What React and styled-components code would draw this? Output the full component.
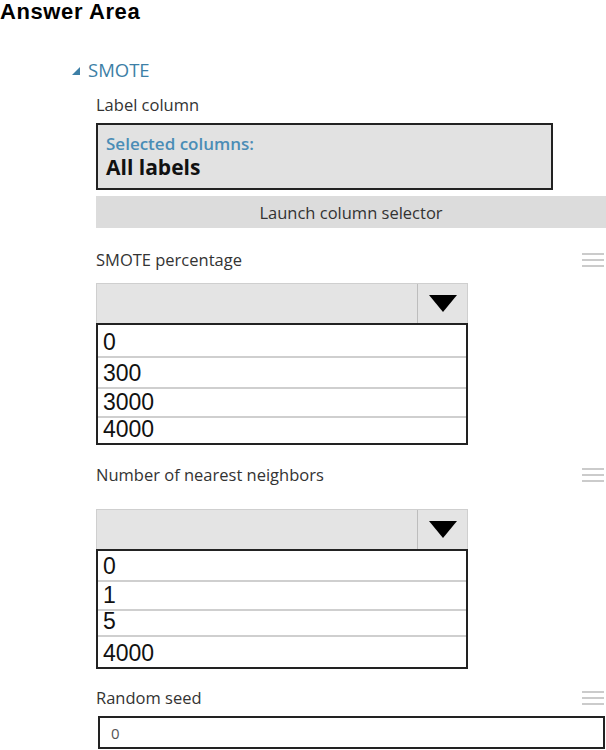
import React from 'react';
import styled, { createGlobalStyle } from 'styled-components';

const GlobalStyle = createGlobalStyle`
  html, body {
    margin: 0;
    padding: 0;
    background: #ffffff;
  }
  body {
    font-family: 'Open Sans', 'Noto Sans', sans-serif;
    color: #333;
  }
`;

const Page = styled.div`
  width: 606px;
  height: 750px;
  overflow: hidden;
  display: flex;
  flex-direction: column;
`;

const Title = styled.h1`
  margin: 0;
  font-family: 'Liberation Sans', Arial, sans-serif;
  font-size: 22px;
  letter-spacing: 0.6px;
  font-weight: bold;
  color: #000;
  line-height: 24px;
`;

const SectionHead = styled.div`
  display: flex;
  align-items: center;
  gap: 8px;
  margin: 34px 0 0 72px;
  font-size: 18.5px;
  color: #3d7fa6;
  line-height: 24px;
`;

const Caret = styled.span`
  width: 0;
  height: 0;
  border-left: 8px solid transparent;
  border-bottom: 8px solid #3d7fa6;
  margin-top: 2px;
`;

const Body = styled.div`
  display: flex;
  flex-direction: column;
  padding-left: 96px;
`;

const LabelRow = styled.div`
  display: flex;
  justify-content: space-between;
  align-items: center;
  font-size: 16.5px;
  color: #333;
  line-height: 22px;
  margin-top: ${(p) => p.$top}px;
  padding-right: 2px;
`;

const Handle = styled.span`
  display: flex;
  flex-direction: column;
  gap: 4px;
  width: 22px;
  & > i {
    display: block;
    height: 2px;
    background: #cbcbcb;
  }
`;

const SelectedBox = styled.div`
  margin-top: 7px;
  width: 457px;
  height: 67px;
  border: 2px solid #222;
  background: #e2e2e2;
  padding: 9px 0 0 8px;
  box-sizing: border-box;
`;

const SelectedCaption = styled.div`
  font-size: 17px;
  font-weight: 600;
  color: #4a8db6;
  line-height: 20px;
`;

const SelectedValue = styled.div`
  font-size: 21px;
  font-weight: bold;
  color: #111;
  line-height: 26px;
`;

const LaunchButton = styled.div`
  margin-top: 6px;
  height: 32px;
  background: #dcdcdc;
  display: flex;
  align-items: center;
  justify-content: center;
  font-size: 16.5px;
  color: #333;
`;

const Dropdown = styled.div`
  margin-top: ${(p) => p.$top}px;
  width: 372px;
  display: flex;
  flex-direction: column;
`;

const SelectBar = styled.div`
  height: 40px;
  display: flex;
  background: #e4e4e4;
  border: 1px solid #cfcfcf;
  border-bottom: none;
  box-sizing: border-box;
`;

const SelectField = styled.div`
  flex: 1;
`;

const ArrowCell = styled.div`
  width: 49px;
  border-left: 1px solid #bdbdbd;
  display: flex;
  align-items: center;
  justify-content: center;
`;

const Arrow = styled.span`
  width: 0;
  height: 0;
  border-left: 14px solid transparent;
  border-right: 14px solid transparent;
  border-top: 17px solid #000;
`;

const OptionList = styled.div`
  border: 2px solid #222;
  display: flex;
  flex-direction: column;
  background: #fff;
`;

const Option = styled.div`
  height: ${(p) => p.$h}px;
  display: flex;
  align-items: flex-end;
  padding: 0 0 2px 5px;
  box-sizing: border-box;
  font-family: 'Liberation Sans', Arial, sans-serif;
  font-size: 23px;
  line-height: 24px;
  color: #111;
  border-top: ${(p) => (p.$first ? 'none' : '2px solid #cfcfcf')};
`;

const SeedInput = styled.div`
  margin-top: 7px;
  height: 33px;
  width: 507px;
  margin-left: 2px;
  border: 2px solid #222;
  box-sizing: border-box;
  display: flex;
  align-items: center;
  padding-left: 11px;
  font-size: 15px;
  color: #555;
`;

const HandleIcon = () => (
  <Handle>
    <i />
    <i />
    <i />
  </Handle>
);

const DropList = ({ top, options }) => (
  <Dropdown $top={top}>
    <SelectBar>
      <SelectField />
      <ArrowCell>
        <Arrow />
      </ArrowCell>
    </SelectBar>
    <OptionList>
      {options.map((o, i) => (
        <Option key={o.label} $h={o.h} $first={i === 0}>
          {o.label}
        </Option>
      ))}
    </OptionList>
  </Dropdown>
);

const percentOptions = [
  { label: '0', h: 31 },
  { label: '300', h: 31 },
  { label: '3000', h: 29 },
  { label: '4000', h: 27 },
];

const neighborOptions = [
  { label: '0', h: 29 },
  { label: '1', h: 29 },
  { label: '5', h: 26 },
  { label: '4000', h: 32 },
];

const App = () => {
  return (
    <>
      <GlobalStyle />
      <Page>
        <Title>Answer Area</Title>
        <SectionHead>
          <Caret />
          SMOTE
        </SectionHead>
        <Body>
          <LabelRow $top={12}>
            <span>Label column</span>
          </LabelRow>
          <SelectedBox>
            <SelectedCaption>Selected columns:</SelectedCaption>
            <SelectedValue>All labels</SelectedValue>
          </SelectedBox>
          <LaunchButton>Launch column selector</LaunchButton>
          <LabelRow $top={21}>
            <span>SMOTE percentage</span>
            <HandleIcon />
          </LabelRow>
          <DropList top={12} options={percentOptions} />
          <LabelRow $top={19}>
            <span>Number of nearest neighbors</span>
            <HandleIcon />
          </LabelRow>
          <DropList top={23} options={neighborOptions} />
          <LabelRow $top={18}>
            <span>Random seed</span>
            <HandleIcon />
          </LabelRow>
          <SeedInput>0</SeedInput>
        </Body>
      </Page>
    </>
  );
};

export default App;
